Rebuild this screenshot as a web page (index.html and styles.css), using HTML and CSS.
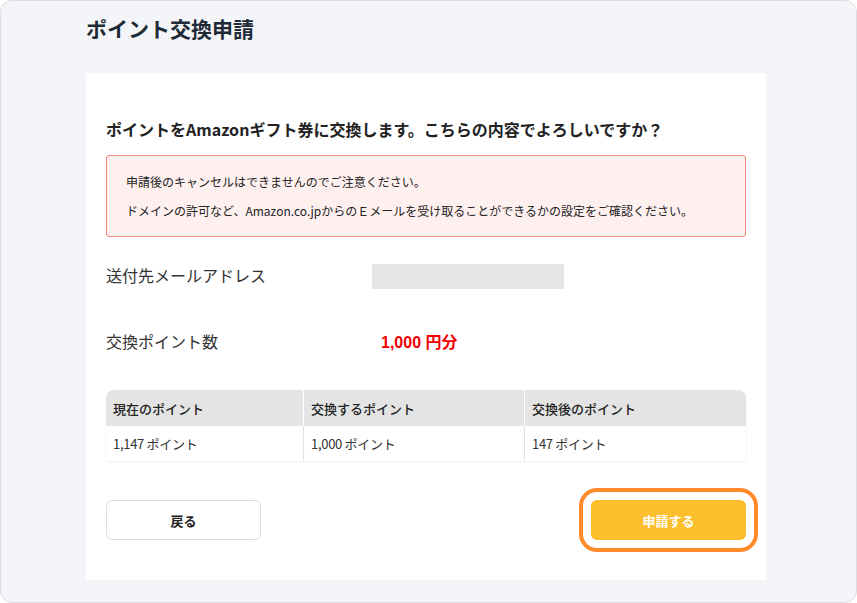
FILE: index.html
```html
<!DOCTYPE html>
<html lang="ja">
<head>
<meta charset="utf-8">
<link rel="stylesheet" href="styles.css">
</head>
<body>
<div class="frame">
  <h1 class="page-title">ポイント交換申請</h1>
  <div class="card">
    <h2 class="confirm">ポイントをAmazonギフト券に交換します。こちらの内容でよろしいですか？</h2>
    <div class="alert">
      <p>申請後のキャンセルはできませんのでご注意ください。</p>
      <p>ドメインの許可など、Amazon.co.jpからのＥメールを受け取ることができるかの設定をご確認ください。</p>
    </div>
    <div class="field field-mail">
      <div class="label">送付先メールアドレス</div>
      <div class="mask"></div>
    </div>
    <div class="field field-points">
      <div class="label">交換ポイント数</div>
      <div class="amount">1,000 円分</div>
    </div>
    <div class="table">
      <div class="th">現在のポイント</div>
      <div class="th">交換するポイント</div>
      <div class="th">交換後のポイント</div>
      <div class="td">1,147 ポイント</div>
      <div class="td">1,000 ポイント</div>
      <div class="td">147 ポイント</div>
    </div>
    <div class="actions">
      <button class="btn btn-back">戻る</button>
      <button class="btn btn-submit">申請する</button>
    </div>
  </div>
</div>
</body>
</html>
```

FILE: styles.css
```css
* { box-sizing: border-box; }
html, body {
  margin: 0;
  padding: 0;
  background: #ffffff;
}
body {
  font-family: "Noto Sans CJK JP", "Noto Sans", sans-serif;
  color: #333;
}
.frame {
  width: 857px;
  height: 603px;
  border: 1px solid #dcdde0;
  border-radius: 12px;
  background: #f4f5f9;
  padding: 0 90px 0 85px;
  overflow: hidden;
}
.page-title {
  margin: 12px 0 30px;
  font-size: 21px;
  line-height: 30px;
  font-weight: 700;
  color: #1f2a37;
}
.card {
  background: #fff;
  height: 507px;
  padding: 44px 20px 40px;
}
.confirm {
  margin: 0;
  font-size: 16px;
  line-height: 24px;
  font-weight: 700;
  color: #222;
}
.alert {
  margin-top: 14px;
  height: 82px;
  border: 1px solid #f3877f;
  border-radius: 3px;
  background: #fff0f0;
  padding: 17px 19px 0;
}
.alert p {
  margin: 0 0 11px;
  font-size: 12px;
  line-height: 18px;
  color: #222;
}
.field {
  display: flex;
  align-items: center;
  height: 25px;
}
.field-mail { margin-top: 27px; }
.field-points { margin-top: 41px; }
.label {
  width: 266px;
  font-size: 16px;
  line-height: 20px;
  margin-top: -4px;
  color: #333;
}
.mask {
  width: 192px;
  height: 25px;
  background: #e5e5e5;
}
.amount {
  padding-left: 9px;
  margin-top: -4px;
  font-family: "Liberation Sans", "Noto Sans CJK JP", sans-serif;
  font-size: 16px;
  font-weight: 700;
  color: #f00000;
}
.table {
  margin-top: 35px;
  display: grid;
  grid-template-columns: 197px 221px 1fr;
  border-radius: 8px 8px 0 0;
  overflow: hidden;
  box-shadow: 0 1px 3px rgba(0,0,0,0.07);
}
.th, .td {
  padding: 0 7px;
  display: flex;
  align-items: center;
  font-size: 13px;
  color: #333;
}
.th {
  height: 36px;
  background: #e4e4e4;
  font-weight: 500;
  color: #222;
}
.td {
  height: 35px;
  background: #fff;
  letter-spacing: -0.3px;
}
.th + .th { border-left: 1px solid #fff; }
.td:nth-child(5), .td:nth-child(6) { border-left: 1px solid #e2e2e2; }
.actions {
  margin-top: 39px;
  display: flex;
  justify-content: space-between;
}
.btn {
  width: 155px;
  height: 40px;
  border-radius: 6px;
  font-family: "Noto Sans CJK JP", sans-serif;
  font-size: 13px;
  font-weight: 700;
  cursor: pointer;
}
.btn-back {
  background: #fff;
  border: 1px solid #dedede;
  color: #222;
}
.btn-submit {
  background: #fdbf2d;
  border: none;
  color: #fff;
  outline: 4px solid #fe8a2a;
  outline-offset: 8px;
}
```
